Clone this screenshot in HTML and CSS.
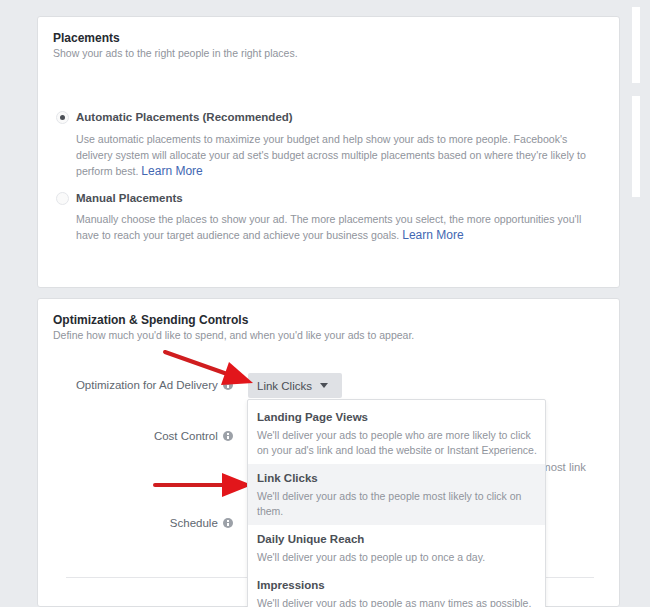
FILE: index.html
```html
<!DOCTYPE html>
<html lang="en">
<head>
    <meta charset="UTF-8">
    <meta name="viewport" content="width=device-width, initial-scale=1.0">
    <title>Placements</title>
    <link rel="stylesheet" href="styles.css">
</head>
<body>
    <div class="page">
        <div class="main">
            <!-- Placements card -->
            <div class="card placements">
                <h2 class="card-title">Placements</h2>
                <p class="card-sub">Show your ads to the right people in the right places.</p>

                <div class="option first">
                    <span class="radio checked"></span>
                    <div class="option-body">
                        <div class="option-title">Automatic Placements (Recommended)</div>
                        <p class="option-desc">Use automatic placements to maximize your budget and help show your ads to more people. Facebook's delivery system will allocate your ad set's budget across multiple placements based on where they're likely to perform best. <a href="#" class="learn">Learn More</a></p>
                    </div>
                </div>

                <div class="option second">
                    <span class="radio"></span>
                    <div class="option-body">
                        <div class="option-title">Manual Placements</div>
                        <p class="option-desc">Manually choose the places to show your ad. The more placements you select, the more opportunities you'll have to reach your target audience and achieve your business goals. <a href="#" class="learn">Learn More</a></p>
                    </div>
                </div>
            </div>

            <!-- Optimization card -->
            <div class="card optimization">
                <h2 class="card-title">Optimization &amp; Spending Controls</h2>
                <p class="card-sub">Define how much you'd like to spend, and when you'd like your ads to appear.</p>

                <div class="form-row row-delivery">
                    <div class="label">Optimization for Ad Delivery <span class="info"></span></div>
                    <div class="value">
                        <div class="dropdown">
                            <button class="select">Link Clicks <span class="caret"></span></button>
                            <div class="menu">
                                <div class="menu-item">
                                    <div class="item-title">Landing Page Views</div>
                                    <div class="item-desc">We'll deliver your ads to people who are more likely to click on your ad's link and load the website or Instant Experience.</div>
                                </div>
                                <div class="menu-item active">
                                    <div class="item-title">Link Clicks</div>
                                    <div class="item-desc">We'll deliver your ads to the people most likely to click on them.</div>
                                </div>
                                <div class="menu-item">
                                    <div class="item-title">Daily Unique Reach</div>
                                    <div class="item-desc">We'll deliver your ads to people up to once a day.</div>
                                </div>
                                <div class="menu-item">
                                    <div class="item-title">Impressions</div>
                                    <div class="item-desc">We'll deliver your ads to people as many times as possible.</div>
                                </div>
                            </div>
                        </div>
                    </div>
                </div>

                <div class="form-row row-cost">
                    <div class="label">Cost Control <span class="info"></span></div>
                    <div class="value">
                        <div class="select-plain">Lowest cost</div>
                        <p class="value-note">Facebook will aim to spend your entire budget and get the most link</p>
                        <p class="value-note">clicks.</p>
                    </div>
                </div>

                <div class="form-row row-schedule">
                    <div class="label">Schedule <span class="info"></span></div>
                    <div class="value">
                        <div class="select-plain">Run ad set continuously</div>
                    </div>
                </div>

                <hr class="divider">
            </div>
        </div>

        <div class="side">
            <div class="side-block top"></div>
            <div class="side-block bottom"></div>
        </div>

        <!-- annotation arrows -->
        <svg class="arrows" width="650" height="607" viewBox="0 0 650 607">
            <line x1="165" y1="352" x2="230" y2="375" stroke="#d01d1f" stroke-width="4" stroke-linecap="round"/>
            <polygon points="253,383 221,385 229,362" fill="#e2161b"/>
            <line x1="155" y1="485" x2="226" y2="485" stroke="#d01d1f" stroke-width="4" stroke-linecap="round"/>
            <polygon points="222,473 252,485 222,497" fill="#e2161b"/>
        </svg>
    </div>
</body>
</html>
```

FILE: styles.css
```css
* {
    box-sizing: border-box;
}

body {
    margin: 0;
    background: #e9ebee;
    font-family: "Liberation Sans", Arial, sans-serif;
    color: #4b4f56;
    overflow: hidden;
}

.page {
    position: relative;
    display: flex;
    gap: 12px;
    width: 650px;
    height: 607px;
    padding: 7px 0 0 37px;
    overflow: hidden;
}

.main {
    width: 583px;
    margin-top: 9px;
    display: flex;
    flex-direction: column;
    gap: 10px;
}

.card {
    background: #fff;
    border: 1px solid #dddfe2;
    border-radius: 3px;
    padding: 13px 15px 0;
}

.card-title {
    margin: 0;
    font-size: 12px;
    line-height: 16px;
    font-weight: bold;
    color: #262a30;
}

.card-sub {
    margin: 0;
    font-size: 10.5px;
    line-height: 14px;
    color: #90949c;
}

/* placements */
.placements {
    padding-bottom: 44px;
}

.option {
    display: flex;
    padding-left: 3px;
}

.option.first {
    margin-top: 49px;
}

.option.second {
    margin-top: 11px;
}

.radio {
    flex: none;
    width: 13px;
    height: 13px;
    margin-top: 2px;
    margin-right: 7px;
    border-radius: 50%;
    border: 1px solid #e4e6ea;
    background: #fafafa;
    position: relative;
}

.radio.checked::after {
    content: "";
    position: absolute;
    left: 3px;
    top: 3px;
    width: 5px;
    height: 5px;
    border-radius: 50%;
    background: #4b4f56;
}

.option-title {
    font-size: 11.5px;
    line-height: 16px;
    font-weight: bold;
    color: #4b4f56;
}

.option-desc {
    margin: 6px 0 0;
    width: 522px;
    font-size: 10.6px;
    line-height: 16px;
    color: #90949c;
}

.option.second .option-desc {
    margin-top: 5px;
}

.learn {
    color: #4267b2;
    font-size: 12px;
    line-height: 14px;
    text-decoration: none;
}

/* optimization */
.optimization {
    flex: 1;
}

.form-row {
    display: grid;
    grid-template-columns: 180px 1fr;
    column-gap: 15px;
}

.row-delivery {
    margin-top: 31px;
}

.row-cost {
    margin-top: 26px;
}

.row-schedule {
    margin-top: 23px;
}

.label {
    text-align: right;
    font-size: 11.5px;
    line-height: 24px;
    color: #606770;
    white-space: nowrap;
}

.row-delivery .label {
    line-height: 25px;
}

.info {
    display: inline-block;
    width: 10px;
    height: 10px;
    margin-left: 2px;
    vertical-align: -1px;
    border-radius: 50%;
    background: #9ca1a8;
    position: relative;
}

.info::before {
    content: "";
    position: absolute;
    left: 4px;
    top: 2px;
    width: 2px;
    height: 2px;
    background: #fff;
}

.info::after {
    content: "";
    position: absolute;
    left: 4px;
    top: 5px;
    width: 2px;
    height: 3px;
    background: #fff;
}

.dropdown {
    position: relative;
    width: 95px;
}

.select {
    display: flex;
    align-items: center;
    gap: 8px;
    width: 94px;
    height: 25px;
    padding: 0 9px;
    border: none;
    border-radius: 2px;
    background: #dfe1e5;
    font-family: inherit;
    font-size: 11.5px;
    color: #4b4f56;
}

.caret {
    width: 0;
    height: 0;
    border-left: 4px solid transparent;
    border-right: 4px solid transparent;
    border-top: 5px solid #4b4f56;
}

.menu {
    position: absolute;
    left: -1px;
    top: 26px;
    width: 299px;
    padding-top: 3px;
    background: #fff;
    border: 1px solid #dddfe2;
    border-radius: 2px;
    box-shadow: 0 2px 4px rgba(0, 0, 0, 0.08);
    z-index: 2;
}

.menu-item {
    padding: 6px 0 6px 9px;
}

.menu-item.active {
    background: #f2f3f5;
}

.item-title {
    font-size: 11.5px;
    line-height: 16px;
    font-weight: bold;
    color: #4b4f56;
}

.item-desc {
    margin-top: 3px;
    font-size: 10.5px;
    line-height: 15px;
    color: #90949c;
}

.select-plain {
    height: 24px;
    font-size: 11.5px;
    line-height: 24px;
    color: #4b4f56;
}

.value-note {
    margin: 12px 0 0;
    font-size: 11.3px;
    line-height: 14px;
    color: #90949c;
    white-space: nowrap;
}

.value-note + .value-note {
    margin-top: 0;
}

.divider {
    margin: 42px 10px 0 13px;
    border: none;
    border-top: 1px solid #e5e6e9;
}

/* right rail */
.side {
    width: 8px;
    display: flex;
    flex-direction: column;
    gap: 13px;
}

.side-block {
    background: #fff;
}

.side-block.top {
    height: 76px;
}

.side-block.bottom {
    height: 101px;
}

.arrows {
    position: absolute;
    left: 0;
    top: 0;
    pointer-events: none;
}
```
